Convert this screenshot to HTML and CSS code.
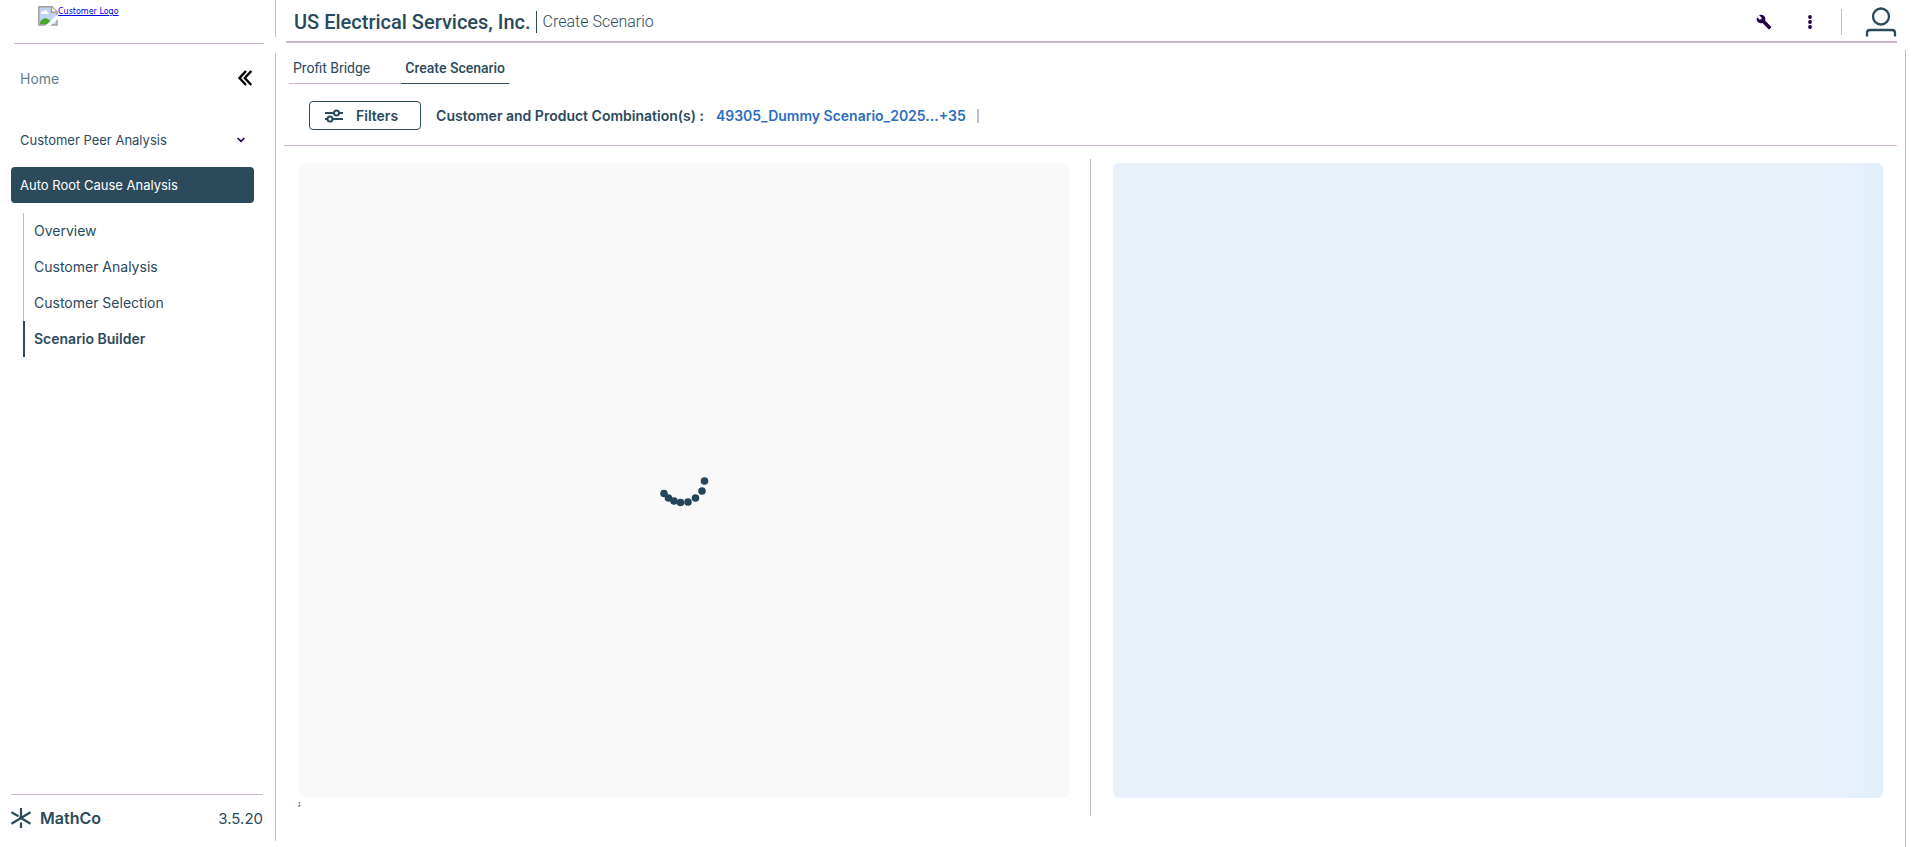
FILE: index.html
```html
<!DOCTYPE html>
<html lang="en">
<head>
<meta charset="utf-8">
<title>Create Scenario</title>
<link rel="stylesheet" href="styles.css">
</head>
<body>
<div class="shell">
  <aside class="sidebar">
    <div class="brand">
      <a class="brand-link" href="#">
        <svg class="brand-picture" width="20" height="20" viewBox="0 0 20 20" aria-hidden="true">
          <path d="M.8.8H14l5 5V19H.8z" fill="#c3d5f3" stroke="#a0a0a0" stroke-width="1.5"/>
          <path d="M3 7c0-2 2-2 2.500-1C6 3.500 9 4 9 6c2 0 2 2 0 2H4C3 8 3 7.500 3 7z" fill="#fff"/>
          <path d="M1.500 18.300c1-6 6-8 10-4.300l3 4.300z" fill="#4aa52e"/>
          <path d="M13.500.8v5.500H19" fill="#fff" stroke="#a0a0a0" stroke-width="1.500"/>
          <path d="M7 20 20 8v5L12 20z" fill="#fff"/>
        </svg><span>Customer Logo</span>
      </a>
    </div>
    <div class="home-row">
      <a class="home-link" href="#">Home</a>
      <button class="icon-button" type="button" aria-label="Collapse menu">
        <svg width="14" height="16" viewBox="0 0 14 16" fill="none" stroke="#000" stroke-width="2.400"><path d="M8 1 1.500 8 8 15M13.300 1 6.800 8l6.500 7"/></svg>
      </button>
    </div>
    <nav class="menu">
      <button class="menu-group" type="button">Customer Peer Analysis
        <svg width="8" height="6" viewBox="0 0 8 6" fill="none" stroke="#220047" stroke-width="1.600"><path d="m.6 1 3.400 3.400L7.400 1"/></svg>
      </button>
      <button class="menu-group menu-group-active" type="button">Auto Root Cause Analysis</button>
      <ul class="submenu">
        <li><a href="#">Overview</a></li>
        <li><a href="#">Customer Analysis</a></li>
        <li><a href="#">Customer Selection</a></li>
        <li><a class="current" href="#">Scenario Builder</a></li>
      </ul>
    </nav>
    <footer class="sidebar-footer">
      <svg width="20" height="20" viewBox="0 0 20 20" fill="none" stroke="#2b4a5c" stroke-width="2.200"><path d="M10 0v10M10 14.500V20M.5 4.300l7 4M19.500 4.300 10 10M10 10 .5 15.700M10 10l9.500 5.700"/><circle cx="10" cy="9.500" r="1.800" fill="#2b4a5c" stroke="none"/></svg>
      <span class="company">MathCo</span>
      <span class="version">3.5.20</span>
    </footer>
  </aside>
  <div class="rail"><span class="rail-top"></span><span class="rail-rest"></span></div>
  <div class="page">
    <header class="page-header">
      <h1>US Electrical Services, Inc.</h1>
      <span class="page-name">Create Scenario</span>
      <div class="actions">
        <button class="icon-button" type="button" aria-label="Tools">
          <svg width="16" height="16" viewBox="0 0 24 24" fill="#220047"><path d="m22.700 19-9.100-9.100c.9-2.300.4-5-1.500-6.900-2-2-5-2.400-7.400-1.300L9 6 6 9 1.600 4.700C.4 7.100.9 10.100 2.900 12.100c1.900 1.900 4.600 2.400 6.900 1.500l9.100 9.100c.4.4 1 .4 1.400 0l2.300-2.300c.5-.4.5-1.100.1-1.400z"/></svg>
        </button>
        <button class="icon-button" type="button" aria-label="More">
          <svg width="4" height="14" viewBox="0 0 4 14" fill="#220047"><circle cx="2" cy="2" r="1.900"/><circle cx="2" cy="7" r="1.900"/><circle cx="2" cy="12" r="1.900"/></svg>
        </button>
        <span class="action-rule"></span>
        <button class="icon-button" type="button" aria-label="Profile">
          <svg width="30" height="30" viewBox="0 0 30 30" fill="none" stroke="#2b4a5c" stroke-width="2.300"><circle cx="15" cy="9.500" r="8"/><path d="M1 29.500V26q0-3 3-3h22q3 0 3 3v3.500"/></svg>
        </button>
      </div>
    </header>
    <nav class="tabs">
      <a href="#">Profit Bridge</a>
      <a class="selected" href="#">Create Scenario</a>
    </nav>
    <div class="toolbar">
      <button class="filters" type="button">
        <svg width="18" height="14" viewBox="0 0 18 14" fill="none" stroke="#2b4a5c" stroke-width="2"><path d="M0 4h9M14 4h4M0 10h3M8 10h10"/><circle cx="11.500" cy="4" r="2.500"/><circle cx="5" cy="10" r="2.500"/></svg>
        Filters
      </button>
      <span class="combo-label">Customer and Product Combination(s) :</span>
      <a class="combo-value" href="#">49305_Dummy Scenario_2025...+35</a>
      <span class="combo-rule"></span>
    </div>
    <main class="content">
      <section class="panel-column">
        <div class="panel loading">
          <svg width="50" height="26" viewBox="0 0 50 26" fill="#264558" role="img" aria-label="Loading"><circle cx="5" cy="15.500" r="3.800"/><circle cx="9.500" cy="20" r="3.800"/><circle cx="15" cy="23" r="3.800"/><circle cx="21.500" cy="24.500" r="3.800"/><circle cx="29" cy="24" r="3.800"/><circle cx="36.500" cy="20" r="3.800"/><circle cx="43" cy="13" r="3.800"/><circle cx="45.500" cy="3" r="3.800"/></svg>
        </div>
        <span class="stray">;</span>
      </section>
      <div class="panel-rule"></div>
      <section class="panel-column">
        <div class="panel placeholder"></div>
      </section>
    </main>
  </div>
  <div class="rail rail-right"><span class="rail-rest"></span></div>
</div>
</body>
</html>
```
FILE: styles.css
```css
:root {
  --ink: #2b4a5c;
  --line: #ceb3cd;
}
* { box-sizing: border-box; }
body {
  margin: 0;
  background: #fff;
  color: var(--ink);
  font-family: Inter, "Liberation Sans", sans-serif;
  font-size: 14px;
}
a { color: inherit; text-decoration: none; }
button {
  border: 0;
  padding: 0;
  background: none;
  color: inherit;
  font: inherit;
}
svg { display: block; flex: none; overflow: visible; }

.shell {
  display: grid;
  grid-template-columns: 275px 1px 1fr 1px;
  min-height: 100vh;
  padding-right: 14px;
}
.sidebar { display: flex; flex-direction: column; }
.brand {
  height: 44px;
  margin: 0 11px 0 14px;
  padding: 6px 24px;
  border-bottom: 1px solid var(--line);
}
.brand-link {
  display: inline-flex;
  color: #0000ee;
  font: 8px/12px "DejaVu Sans", sans-serif;
  text-decoration: underline;
}
.home-row {
  display: flex;
  align-items: center;
  justify-content: space-between;
  height: 68px;
  padding: 0 23px 0 20px;
}
.home-link { color: #627d8a; font-size: 14px; }
.menu { padding: 10px 21px 0 11px; }
.menu-group {
  display: flex;
  align-items: center;
  justify-content: space-between;
  width: 100%;
  height: 36px;
  padding: 0 9px;
  font-size: 13px;
}
.menu-group-active {
  margin-top: 9px;
  border-radius: 4px;
  background: var(--ink);
  color: #fff;
}
.submenu { margin: 10px 0 0 12px; padding: 0; list-style: none; }
.submenu a {
  display: block;
  padding-left: 10px;
  border-left: 1px solid var(--line);
  line-height: 36px;
}
.submenu .current {
  padding-left: 9px;
  border-left: 2px solid var(--ink);
  font-weight: 600;
}
.sidebar-footer {
  display: flex;
  align-items: center;
  gap: 9px;
  height: 53px;
  margin: auto 12px 0 11px;
  padding-bottom: 6px;
  border-top: 1px solid var(--line);
}
.company { font-size: 16px; font-weight: 600; }
.version { margin-left: auto; font-size: 15px; }

.rail { display: flex; flex-direction: column; gap: 16px; padding-bottom: 6px; }
.rail span { background: var(--line); }
.rail-top { height: 37px; }
.rail-rest { flex: 1; }
.rail-right { padding: 50px 0 0; }

.page { display: flex; flex-direction: column; min-width: 0; padding: 0 8px; }
.page-header {
  display: flex;
  align-items: center;
  height: 43px;
  margin-left: 2px;
  padding: 2px 1px 0 8px;
  border-bottom: 2px solid var(--line);
  font-family: Roboto, sans-serif;
}
h1 { margin: 0; font-size: 20px; font-weight: 500; }
.page-name {
  margin-left: 5px;
  padding-left: 6px;
  border-left: 1px solid var(--ink);
  font-size: 16px;
  font-weight: 300;
  line-height: 22px;
}
.actions { display: flex; align-items: center; margin-left: auto; }
.actions .icon-button + .icon-button { margin-left: 36px; }
.action-rule { width: 1px; height: 26px; margin: 0 24px 0 29px; background: var(--line); }

.tabs { display: flex; height: 41px; padding-left: 5px; }
.tabs a {
  padding: 0 31px 0 4px;
  border-bottom: 1px solid var(--line);
  font: 14px/50px Roboto, sans-serif;
}
.tabs .selected {
  padding: 0 4px;
  border-bottom-color: var(--ink);
  font-weight: 500;
}
.toolbar {
  display: flex;
  align-items: center;
  height: 62px;
  padding: 2px 0 0 25px;
  border-bottom: 1px solid var(--line);
  font-weight: 600;
}
.filters {
  display: flex;
  align-items: center;
  gap: 13px;
  height: 29px;
  padding: 0 22px 0 15px;
  border: 1px solid var(--ink);
  border-radius: 4px;
}
.combo-label { margin-left: 15px; }
.combo-value { margin-left: 12px; color: #2c6dc0; }
.combo-rule { width: 2px; height: 14px; margin-left: 11px; background: #c8bed3; }

.content {
  flex: 1;
  display: grid;
  grid-template-columns: 1fr 1px 1fr;
  padding: 13px 14px 31px;
}
.panel-column { display: flex; flex-direction: column; padding-top: 4px; }
.panel-column:first-child { margin-right: 20px; }
.panel-column:last-child { margin-left: 22px; }
.panel { flex: 1; margin-bottom: 18px; border-radius: 6px; }
.panel-rule { background: #c5b5c9; }
.loading {
  display: flex;
  align-items: center;
  justify-content: center;
  margin-bottom: 0;
  padding-top: 20px;
  background: #f9f9f9;
}
.placeholder { background: linear-gradient(90deg, #e9f1fb 93%, #e2effa); }
.stray { height: 18px; font: bold 7px/12px "DejaVu Sans", sans-serif; }
```
